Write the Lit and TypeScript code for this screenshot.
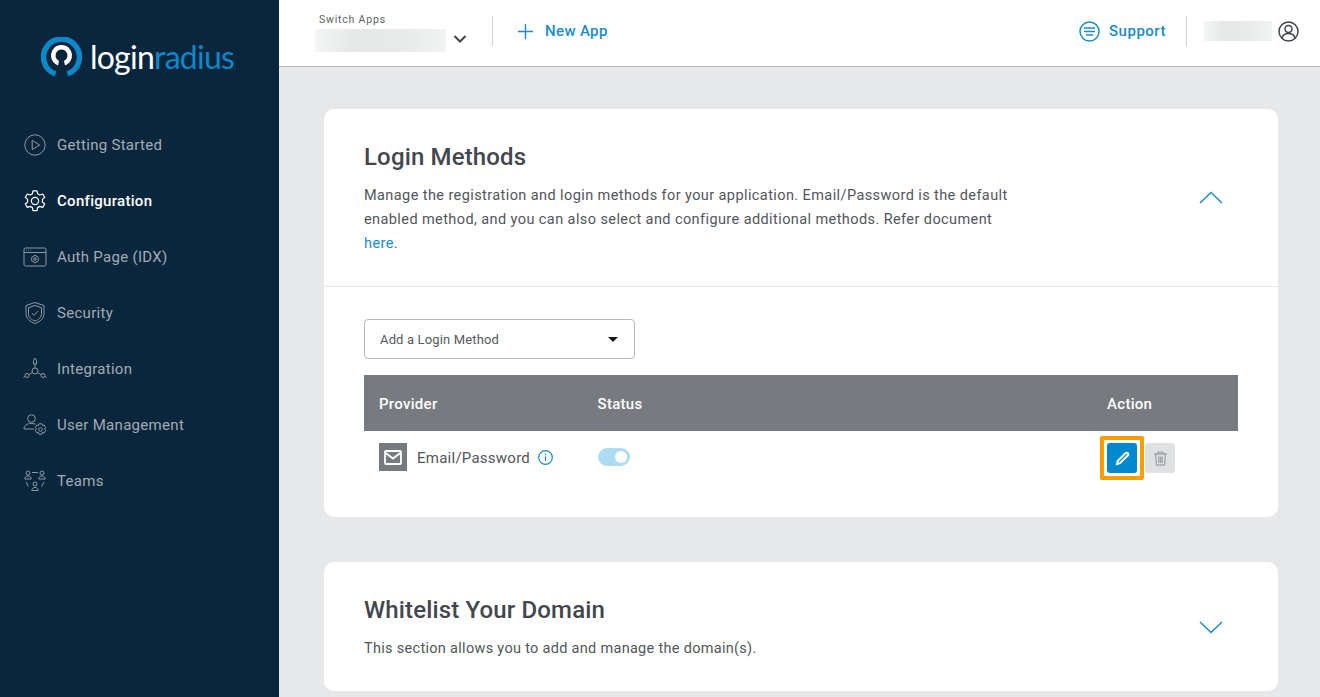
import { LitElement, css, html, svg } from "lit";
import { customElement } from "lit/decorators.js";

const navItems = [
  {
    label: "Getting Started",
    icon: svg`<circle cx="12" cy="12" r="10.2"/><path d="M9.2 7.4v9.2l7.4-4.6z"/>`,
  },
  {
    label: "Configuration",
    active: true,
    icon: svg`<circle cx="12" cy="12" r="3.6"/><path d="M10 1.8h4l.6 3 2.2 1.2 2.9-1 2 3.4-2.3 2v2.6l2.3 2-2 3.4-2.9-1-2.2 1.2-.6 3h-4l-.6-3-2.2-1.2-2.9 1-2-3.4 2.3-2v-2.6l-2.3-2 2-3.4 2.9 1 2.2-1.2z" stroke-linejoin="round"/>`,
  },
  {
    label: "Auth Page (IDX)",
    icon: svg`<rect x="1" y="3" width="22" height="18" rx="1.5"/><path d="M1 7.5h22M3 5.2h.6M5 5.2h.6M7 5.2h.6"/><circle cx="12" cy="14" r="1.3"/><path d="M11 10.5h2l.4 1.1 1.2-.1 1 1.7-.8.8.8.9-1 1.7-1.2-.1-.4 1.1h-2l-.4-1.1-1.2.1-1-1.7.8-.9-.8-.8 1-1.7 1.2.1z"/>`,
  },
  {
    label: "Security",
    icon: svg`<path d="M12 1.5 21 4.5v8c0 5-4 8.400-9 10-5-1.600-9-5-9-10v-8z"/><path d="M12 4.500 18.500 6.600v6c0 3.600-2.900 6.200-6.500 7.400-3.600-1.200-6.500-3.800-6.500-7.400v-6z"/><path d="m8.800 12 2.300 2.300 4-4.300"/>`,
  },
  {
    label: "Integration",
    icon: svg`<circle cx="12" cy="14" r="3"/><path d="M12 11V7M9.400 15.500 6 17.500M14.600 15.500 18 17.500"/><path d="M10.500 7V3.500L12 1l1.500 2.500V7z"/><circle cx="4" cy="18.500" r="2"/><circle cx="20" cy="18.500" r="2"/><path d="M.5 20.500 2 19.500M23.500 20.500 22 19.500"/>`,
  },
  {
    label: "User Management",
    icon: svg`<circle cx="8.500" cy="5.500" r="3.800"/><path d="M1 16c0-3.500 3-5.500 7.500-5.500 1.500 0 2.800.2 4 .7M1 16h10"/><circle cx="17.500" cy="16.500" r="1.800"/><path d="M16 10.800h3l.5 1.700 1.700-.4 1.500 2.500-1.200 1.400 1.200 1.400-1.500 2.500-1.700-.4-.5 1.700h-3l-.5-1.700-1.700.4-1.500-2.500 1.200-1.400-1.200-1.400 1.500-2.500 1.700.4z"/>`,
  },
  {
    label: "Teams",
    icon: svg`<circle cx="5" cy="4" r="2"/><circle cx="19" cy="4" r="2"/><circle cx="12" cy="15" r="2"/><path d="M1.800 10c0-2 1.400-3 3.200-3s3.200 1 3.200 3zM15.800 10c0-2 1.400-3 3.200-3s3.200 1 3.200 3zM8.800 21.500c0-2 1.400-3 3.200-3s3.200 1 3.200 3zM9 3.500h6M3 13l2.500 4.500M21 13l-2.500 4.500"/>`,
  },
];

@customElement("app-root")
export class AppRoot extends LitElement {
  static styles = css`
    :host {
      display: flex;
      width: 1320px;
      height: 697px;
      overflow: hidden;
      font-family: Roboto, "Liberation Sans", sans-serif;
      color: #4a4f55;
      background: #e7e8ea;
    }

    .sidebar {
      width: 279px;
      flex: none;
      background: #0a263d;
      display: flex;
      flex-direction: column;
    }

    .logo {
      height: 114px;
      padding-left: 41px;
      display: flex;
      align-items: center;
      gap: 8px;
      box-sizing: border-box;
    }

    .logo svg {
      width: 41px;
      height: 41px;
      flex: none;
    }

    .wordmark {
      font-family: Lato, sans-serif;
      font-weight: 400;
      font-size: 32px;
      letter-spacing: -0.75px;
      line-height: 40px;
      color: #fff;
      padding-top: 9px;
    }

    .wordmark span {
      color: #0f88c9;
    }

    .wordmark small {
      font-size: 8px;
      color: #0f88c9;
    }

    .nav {
      display: flex;
      flex-direction: column;
      padding-top: 3px;
    }

    .nav-item {
      height: 56px;
      padding-left: 23px;
      display: flex;
      align-items: center;
      gap: 10px;
      font-size: 15px;
      letter-spacing: 0.3px;
      color: #a3abb3;
    }

    .nav-item svg {
      width: 24px;
      height: 24px;
      flex: none;
      fill: none;
      stroke: #8e98a2;
      stroke-width: 1;
    }

    .nav-item.active {
      color: #fff;
      font-weight: 500;
    }

    .nav-item.active svg {
      stroke: #fff;
      stroke-width: 1.2;
    }

    .content {
      flex: 1;
      min-width: 0;
      display: flex;
      flex-direction: column;
    }

    .topbar {
      height: 67px;
      flex: none;
      box-sizing: border-box;
      background: #fff;
      border-bottom: 1px solid #b9bbbd;
      display: flex;
      align-items: center;
      padding: 0 21px 4px 36px;
    }

    .switcher {
      width: 177px;
      display: flex;
      flex-direction: column;
      gap: 2px;
      margin-top: 3px;
    }

    .switch-label {
      font-size: 10.5px;
      letter-spacing: 0.8px;
      line-height: 14px;
      padding-left: 4px;
      color: #5b6066;
    }

    .switch-row {
      display: flex;
      align-items: center;
      gap: 7px;
    }

    .blur {
      background: linear-gradient(90deg, #f4f5f5, #e6e7e7 30%, #e9eaea 70%, #f2f3f3);
    }

    .blur.app {
      width: 131px;
      height: 23px;
    }

    .chevron {
      width: 14px;
      height: 10px;
      fill: none;
      stroke: #3f454b;
      stroke-width: 2;
      margin-top: -3px;
    }

    .divider {
      width: 1px;
      height: 30px;
      background: #cfd1d3;
      flex: none;
    }

    .new-app {
      margin-left: 25px;
      display: flex;
      align-items: center;
      gap: 12px;
      font-size: 15px;
      font-weight: 500;
      color: #1a8ccb;
      letter-spacing: 0.35px;
    }

    .new-app svg {
      width: 15px;
      height: 15px;
      stroke: #1a8ccb;
      stroke-width: 1.4;
      fill: none;
    }

    .spacer {
      flex: 1;
    }

    .support {
      display: flex;
      align-items: center;
      gap: 9px;
      font-size: 15px;
      font-weight: 500;
      color: #1a8ccb;
      letter-spacing: 0.5px;
      margin-right: 20px;
    }

    .support svg {
      width: 21px;
      height: 21px;
      stroke: #1a8ccb;
      stroke-width: 1.5;
      fill: none;
    }

    .blur.user {
      width: 68px;
      height: 20px;
      margin: 0 6px 0 17px;
    }

    .user-icon {
      width: 21px;
      height: 21px;
      stroke: #3f454b;
      stroke-width: 1.5;
      fill: none;
    }

    .main {
      flex: 1;
      padding: 42px 42px 0 45px;
      display: flex;
      flex-direction: column;
      gap: 45px;
    }

    .card {
      background: #fff;
      border-radius: 10px;
      flex: none;
    }

    .card-head {
      display: flex;
      justify-content: space-between;
      padding: 33px 55px 0 40px;
    }

    .card-head h2 {
      margin: 0;
      font-size: 24px;
      line-height: 30px;
      font-weight: 500;
      letter-spacing: 0.15px;
      color: #42474d;
    }

    .card-head p {
      margin: 12px 0 0;
      width: 650px;
      font-size: 14.5px;
      line-height: 24px;
      letter-spacing: 0.41px;
      color: #51565c;
    }

    .card-head a {
      color: #1a8ccb;
      text-decoration: none;
    }

    .toggle-arrow {
      width: 24px;
      height: 13px;
      fill: none;
      stroke: #1a8ccb;
      stroke-width: 1.5;
      margin-top: 49px;
    }

    .first .card-head {
      height: 178px;
      box-sizing: border-box;
      border-bottom: 1px solid #e6e7e8;
    }

    .card-body {
      padding: 32px 40px 0;
      height: 230px;
      box-sizing: border-box;
    }

    .select {
      width: 271px;
      height: 40px;
      box-sizing: border-box;
      border: 1px solid #b5b7ba;
      border-radius: 4px;
      padding: 0 15px;
      display: flex;
      align-items: center;
      justify-content: space-between;
      font-size: 13px;
      letter-spacing: 0.15px;
      color: #555a60;
    }

    .caret {
      width: 0;
      height: 0;
      border-left: 5px solid transparent;
      border-right: 5px solid transparent;
      border-top: 5px solid #16191c;
      margin-right: 1px;
    }

    .table {
      margin-top: 16px;
    }

    .row {
      display: grid;
      grid-template-columns: 218.500px 1fr 131px;
      padding-left: 15px;
      align-items: center;
    }

    .row.header {
      height: 56px;
      padding-top: 2px;
      box-sizing: border-box;
      background: #777b7f;
      color: #fff;
      font-size: 15px;
      font-weight: 500;
      letter-spacing: 0.3px;
    }

    .row.data {
      height: 54px;
    }

    .provider {
      display: flex;
      align-items: center;
      font-size: 15px;
      letter-spacing: 0.25px;
      color: #51565c;
      margin-bottom: 2px;
    }

    .provider-name {
      padding-top: 2px;
    }

    .mail {
      width: 28px;
      height: 28px;
      background: #777b7f;
      display: flex;
      align-items: center;
      justify-content: center;
      margin-right: 10px;
    }

    .mail svg {
      width: 18px;
      height: 15px;
      fill: none;
      stroke: #fff;
      stroke-width: 1.8;
    }

    .info {
      width: 15px;
      height: 15px;
      margin-left: 8px;
      stroke: #1a8ccb;
      stroke-width: 1.2;
      fill: none;
    }

    .switch {
      width: 32px;
      height: 18px;
      border-radius: 9px;
      background: #aedcf2;
      position: relative;
      margin-bottom: 2px;
    }

    .switch::after {
      content: "";
      position: absolute;
      right: 3px;
      top: 3px;
      width: 12px;
      height: 12px;
      border-radius: 50%;
      background: #fff;
    }

    .actions {
      display: flex;
      align-items: center;
      gap: 1px;
    }

    .edit-frame {
      border: 4px solid #ff9c00;
      border-radius: 2px;
      padding: 3px;
      margin-left: -7px;
      display: flex;
    }

    .icon-btn {
      width: 30px;
      height: 30px;
      border-radius: 3px;
      display: flex;
      align-items: center;
      justify-content: center;
    }

    .icon-btn.edit {
      background: #0089cf;
    }

    .icon-btn.edit svg {
      width: 15px;
      height: 15px;
      fill: none;
      stroke: #fff;
      stroke-width: 2;
    }

    .icon-btn.delete {
      background: #e0e1e2;
    }

    .icon-btn.delete svg {
      width: 15px;
      height: 15px;
      fill: none;
      stroke: #a2a5a8;
      stroke-width: 1.300;
    }

    .second {
      height: 129px;
    }

    .second .toggle-arrow {
      margin-top: 26px;
    }

    .second .card-head {
      padding-top: 33px;
    }

    .second .card-head p {
      letter-spacing: 0.3px;
    }
  `;

  render() {
    return html`
      <aside class="sidebar">
        <div class="logo">
          <svg viewBox="0 0 41 41">
            <path d="M14.500 37A18 18 0 1 1 26.500 37" fill="none" stroke="#0f88c9" stroke-width="5.500"/>
            <path d="M17 28.400A10.500 10.500 0 1 1 24 28.400L23 24A6 6 0 1 0 18 24z" fill="#fff"/>
          </svg>
          <div class="wordmark">login<span>radius</span><small>.</small></div>
        </div>
        <nav class="nav">
          ${navItems.map(
            (item) => html`
              <div class="nav-item ${item.active ? "active" : ""}">
                <svg viewBox="0 0 24 24">${item.icon}</svg>
                <span>${item.label}</span>
              </div>
            `
          )}
        </nav>
      </aside>

      <div class="content">
        <header class="topbar">
          <div class="switcher">
            <div class="switch-label">Switch Apps</div>
            <div class="switch-row">
              <div class="blur app"></div>
              <svg class="chevron" viewBox="0 0 14 10"><path d="m1.500 2 5.500 5.500L12.500 2"/></svg>
            </div>
          </div>
          <div class="divider"></div>
          <div class="new-app">
            <svg viewBox="0 0 15 15"><path d="M7.500 0v15M0 7.500h15"/></svg>
            <span>New App</span>
          </div>
          <div class="spacer"></div>
          <div class="support">
            <svg viewBox="0 0 21 21"><circle cx="10.500" cy="10.500" r="9.500"/><path d="M5 7h11M5 10.500h11M7 14h7"/></svg>
            <span>Support</span>
          </div>
          <div class="divider"></div>
          <div class="blur user"></div>
          <svg class="user-icon" viewBox="0 0 21 21"><circle cx="10.500" cy="10.500" r="9.500"/><circle cx="10.500" cy="8" r="3.500"/><path d="M4 17c.8-3 3.300-4.500 6.500-4.500S16.200 14 17 17"/></svg>
        </header>

        <main class="main">
          <section class="card first">
            <div class="card-head">
              <div>
                <h2>Login Methods</h2>
                <p>Manage the registration and login methods for your application. Email/Password is the default enabled method, and you can also select and configure additional methods. Refer document <a>here</a>.</p>
              </div>
              <svg class="toggle-arrow" viewBox="0 0 24 13"><path d="M1 12 12 1.500 23 12"/></svg>
            </div>
            <div class="card-body">
              <div class="select">
                <span>Add a Login Method</span>
                <span class="caret"></span>
              </div>
              <div class="table">
                <div class="row header">
                  <span>Provider</span>
                  <span>Status</span>
                  <span>Action</span>
                </div>
                <div class="row data">
                  <div class="provider">
                    <span class="mail">
                      <svg viewBox="0 0 18 15"><rect x="1" y="1" width="16" height="13" rx="1"/><path d="m1 2.500 8 6 8-6"/></svg>
                    </span>
                    <span class="provider-name">Email/Password</span>
                    <svg class="info" viewBox="0 0 15 15"><circle cx="7.500" cy="7.500" r="6.800"/><path d="M7.500 6.500v4.500M7.500 3.800v1.400"/></svg>
                  </div>
                  <div><div class="switch"></div></div>
                  <div class="actions">
                    <div class="edit-frame">
                      <div class="icon-btn edit">
                        <svg viewBox="0 0 15 15"><path d="M2 13l.8-3.300L10.800 2a1.200 1.200 0 0 1 1.700 0l.5.500a1.200 1.200 0 0 1 0 1.700L5 12.200z"/></svg>
                      </div>
                    </div>
                    <div class="icon-btn delete">
                      <svg viewBox="0 0 15 15"><path d="M1 3h13M5 3V1.200h5V3M2.500 3l1 11h8l1-11M5.800 5.500v6.500M7.500 5.500v6.500M9.200 5.500v6.500"/></svg>
                    </div>
                  </div>
                </div>
              </div>
            </div>
          </section>

          <section class="card second">
            <div class="card-head">
              <div>
                <h2>Whitelist Your Domain</h2>
                <p>This section allows you to add and manage the domain(s).</p>
              </div>
              <svg class="toggle-arrow" viewBox="0 0 24 13"><path d="M1 1 12 11.500 23 1"/></svg>
            </div>
          </section>
        </main>
      </div>
    `;
  }
}
